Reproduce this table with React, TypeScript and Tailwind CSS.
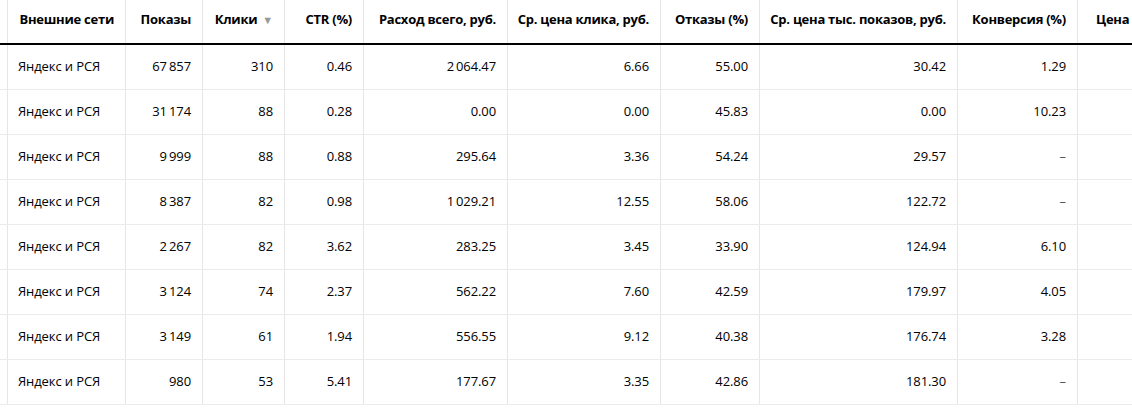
import React from "react";

const T = "\u2009";
const rows: string[][] = [
  ["67" + T + "857", "310", "0.46", "2" + T + "064.47", "6.66", "55.00", "30.42", "1.29"],
  ["31" + T + "174", "88", "0.28", "0.00", "0.00", "45.83", "0.00", "10.23"],
  ["9" + T + "999", "88", "0.88", "295.64", "3.36", "54.24", "29.57", "–"],
  ["8" + T + "387", "82", "0.98", "1" + T + "029.21", "12.55", "58.06", "122.72", "–"],
  ["2" + T + "267", "82", "3.62", "283.25", "3.45", "33.90", "124.94", "6.10"],
  ["3" + T + "124", "74", "2.37", "562.22", "7.60", "42.59", "179.97", "4.05"],
  ["3" + T + "149", "61", "1.94", "556.55", "9.12", "40.38", "176.74", "3.28"],
  ["980", "53", "5.41", "177.67", "3.35", "42.86", "181.30", "–"],
];

const headers = [
  "Показы",
  "Клики",
  "CTR (%)",
  "Расход всего, руб.",
  "Ср. цена клика, руб.",
  "Отказы (%)",
  "Ср. цена тыс. показов, руб.",
  "Конверсия (%)",
];

const grid =
  "grid grid-cols-[8px_118px_77px_82px_79px_144px_153px_99px_198px_120px_1fr]";
const cell = "border-r border-[#e6e6e6] flex items-center justify-end pr-[11px] whitespace-nowrap";

export default function App() {
  return (
    <div
      className="w-[1132px] h-[408px] bg-white text-black overflow-hidden"
      style={{ fontFamily: '"Open Sans", "Noto Sans", sans-serif' }}
    >
      <div className={`${grid} h-[45px] border-b-2 border-black text-[13px] font-bold tracking-[-0.25px]`}>
        <div className="border-r border-[#e6e6e6]" />
        <div className={`${cell} pb-[4px]`}>Внешние сети</div>
        {headers.map((h, i) => (
          <div key={i} className={`${cell} pb-[4px]`}>
            {h}
            {i === 1 && (
              <span className="ml-[5px] text-[11px] text-[#999] relative top-[1px]">▼</span>
            )}
          </div>
        ))}
        <div className="flex items-center pl-[18px] pb-[4px] whitespace-nowrap">
          Цена
        </div>
      </div>
      {rows.map((r, ri) => (
        <div key={ri} className={`${grid} h-[45px] border-b border-[#ebebeb] text-[13px] tracking-[-0.1px]`}>
          <div className="border-r border-[#e6e6e6]" />
          <div className="border-r border-[#e6e6e6] flex items-center pl-[10px] whitespace-nowrap">
            Яндекс и РСЯ
          </div>
          {r.map((v, i) => (
            <div key={i} className={`${cell} ${v === "–" ? "text-[#555]" : ""}`}>
              {v}
            </div>
          ))}
          <div />
        </div>
      ))}
    </div>
  );
}
